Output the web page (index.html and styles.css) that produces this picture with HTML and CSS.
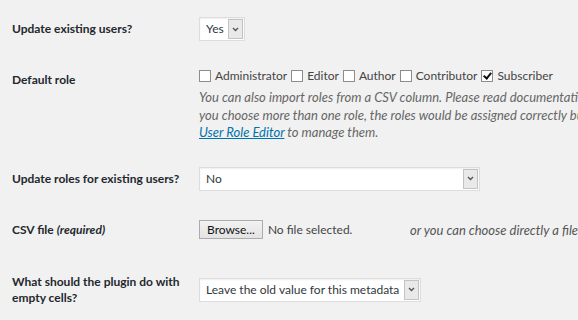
FILE: index.html
```html
<!DOCTYPE html>
<html lang="en">
<head>
    <meta charset="UTF-8">
    <meta name="viewport" content="width=device-width, initial-scale=1.0">
    <title>Import users from CSV</title>
    <link rel="stylesheet" href="styles.css">
</head>
<body>
    <form class="form-table">
        <!-- Update existing users -->
        <div class="form-row">
            <div class="field-label">Update existing users?</div>
            <div class="field">
                <span class="select-wrap">
                    <select name="update_existing_users">
                        <option>Yes</option>
                        <option>No</option>
                    </select>
                    <span class="select-arrow">
                        <svg width="7" height="5" viewBox="0 0 7 5"><path d="M1 1l2.5 2.5L6 1" stroke="#555" stroke-width="1.4" fill="none"/></svg>
                    </span>
                </span>
            </div>
        </div>

        <!-- Default role -->
        <div class="form-row form-row-roles">
            <div class="field-label">Default role</div>
            <div class="field">
                <div class="role-list">
                    <label class="role"><input type="checkbox" name="role[]" value="administrator">Administrator</label>
                    <label class="role"><input type="checkbox" name="role[]" value="editor">Editor</label>
                    <label class="role"><input type="checkbox" name="role[]" value="author">Author</label>
                    <label class="role"><input type="checkbox" name="role[]" value="contributor">Contributor</label>
                    <label class="role"><input type="checkbox" name="role[]" value="subscriber" checked>Subscriber</label>
                </div>
                <p class="description">
                    You can also import roles from a CSV column. Please read documentation tab to see how it can be done. If<br>
                    you choose more than one role, the roles would be assigned correctly but you should use some plugin like<br>
                    <a href="#">User Role Editor</a> to manage them.
                </p>
            </div>
        </div>

        <!-- Update roles -->
        <div class="form-row">
            <div class="field-label">Update roles for existing users?</div>
            <div class="field">
                <span class="select-wrap select-wide">
                    <select name="update_roles_existing_users">
                        <option>No</option>
                        <option>Yes, add new roles and not override existing ones</option>
                    </select>
                    <span class="select-arrow">
                        <svg width="7" height="5" viewBox="0 0 7 5"><path d="M1 1l2.5 2.5L6 1" stroke="#555" stroke-width="1.4" fill="none"/></svg>
                    </span>
                </span>
            </div>
        </div>

        <!-- CSV file -->
        <div class="form-row form-row-file">
            <div class="field-label">CSV file <em>(required)</em></div>
            <div class="field file-field">
                <span class="file-input">
                    <button type="button" class="browse-btn">Browse...</button>
                    <span class="file-name">No file selected.</span>
                </span>
                <em class="file-hint">or you can choose directly a file from your host, click here.</em>
            </div>
        </div>

        <!-- Empty cells -->
        <div class="form-row form-row-empty">
            <div class="field-label">What should the plugin do with empty cells?</div>
            <div class="field">
                <span class="select-wrap">
                    <select name="empty_cell_action">
                        <option>Leave the old value for this metadata</option>
                        <option>Delete the metadata</option>
                    </select>
                    <span class="select-arrow">
                        <svg width="7" height="5" viewBox="0 0 7 5"><path d="M1 1l2.5 2.5L6 1" stroke="#555" stroke-width="1.4" fill="none"/></svg>
                    </span>
                </span>
            </div>
        </div>
    </form>
</body>
</html>
```

FILE: styles.css
```css
html, body {
    overflow: hidden;
}

body {
    margin: 0;
    background-color: #f1f1f1;
    color: #444;
    font-family: Lato, "Open Sans", sans-serif;
    font-size: 12px;
    line-height: 16px;
}

.form-table {
    padding: 5px 0 0 12px;
}

.form-row {
    display: flex;
    align-items: center;
    padding: 12px 0;
}

.field-label {
    flex: none;
    width: 180px;
    padding-right: 7px;
    font-weight: 700;
    color: #23282d;
}

.field {
    flex: none;
    white-space: nowrap;
}

/* Select boxes */
.select-wrap {
    display: inline-flex;
    height: 24px;
    box-sizing: border-box;
    border: 1px solid #ddd;
    background-color: #fff;
    box-shadow: inset 0 1px 2px rgba(0, 0, 0, 0.07);
    vertical-align: middle;
}

.select-wrap select {
    appearance: none;
    -webkit-appearance: none;
    border: none;
    background: transparent;
    font: inherit;
    color: #32373c;
    padding: 0 4px 0 6px;
    margin: 0;
    outline: none;
}

.select-wide {
    width: 281px;
}

.select-wide select {
    flex: 1 1 0;
    min-width: 0;
}

.select-arrow {
    display: flex;
    flex: none;
    align-items: center;
    justify-content: center;
    width: 13px;
    margin: 1px 1px 1px 0;
    border: 1px solid #c3c3c3;
    background-color: #e9e9e9;
}

/* Roles */
.form-row-roles {
    align-items: flex-start;
    padding: 15px 0 13px;
}

.form-row-roles .field-label {
    padding-top: 4px;
}

.role-list {
    display: flex;
    height: 16px;
}

.role {
    display: inline-flex;
    align-items: center;
    margin-right: 4px;
}

.role input {
    appearance: none;
    -webkit-appearance: none;
    width: 12px;
    height: 12px;
    margin: 0 4px 0 0;
    border: 1px solid #8c8c8c;
    background-color: #fff;
    box-sizing: border-box;
}

.role input:checked::after {
    content: '';
    display: block;
    width: 3px;
    height: 6px;
    margin: 0 0 0 3px;
    border: solid #111;
    border-width: 0 2px 2px 0;
    transform: rotate(40deg);
}

.description {
    margin: 5px 0 0;
    color: #666;
    font-size: 13px;
    font-style: italic;
    line-height: 17.5px;
}

.description a {
    color: #0073aa;
}

/* File input */
.form-row-file {
    padding: 15px 0;
}

.file-field {
    display: flex;
    align-items: center;
    height: 24px;
}

.file-input {
    display: flex;
    align-items: center;
    width: 211px;
}

.browse-btn {
    height: 19px;
    padding: 0 7px;
    margin: 0 5px 0 0;
    border: 1px solid #acacac;
    background: linear-gradient(#f2f2f2, #e3e3e3);
    font: inherit;
    color: #111;
    line-height: 16px;
}

.file-hint {
    color: #555;
    font-size: 13px;
}

.form-row-empty {
    padding: 17px 0;
}
```
